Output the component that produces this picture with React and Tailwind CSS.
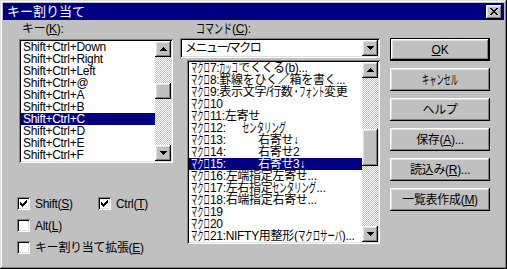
import React from "react";

const raised =
  "shadow-[inset_-1px_-1px_0_#000000,inset_1px_1px_0_#ffffff,inset_-2px_-2px_0_#808080,inset_2px_2px_0_#dfdfdf]";
const sunken =
  "shadow-[inset_1px_1px_0_#808080,inset_-1px_-1px_0_#ffffff,inset_2px_2px_0_#000000,inset_-2px_-2px_0_#dfdfdf]";
const dither =
  "bg-[repeating-conic-gradient(#c0c0c0_0%_25%,#ffffff_0%_50%)] bg-[length:2px_2px]";

// Half-width katakana runs are drawn with full-width glyphs squeezed to half-width cells
function HW({ text, cell = 6.3 }) {
  const parts = text.split(/([\uFF61-\uFF9F]+)/);
  return (
    <>
      {parts.map((p, i) => {
        if (!/[\uFF61-\uFF9F]/.test(p)) return <React.Fragment key={i}>{p}</React.Fragment>;
        const full = p.normalize("NFKC");
        const width = p.length * cell;
        const scale = width / (full.length * 13);
        return (
          <span
            key={i}
            className="inline-block whitespace-nowrap tracking-normal text-[13px] leading-[12px]"
            style={{ width }}
          >
            <span className="inline-block origin-left" style={{ transform: `scaleX(${scale})` }}>
              {full}
            </span>
          </span>
        );
      })}
    </>
  );
}

function Arrow({ down }) {
  return (
    <svg width="7" height="4" viewBox="0 0 7 4" shapeRendering="crispEdges">
      {down ? (
        <g fill="#000">
          <rect x="0" y="0" width="7" height="1" />
          <rect x="1" y="1" width="5" height="1" />
          <rect x="2" y="2" width="3" height="1" />
          <rect x="3" y="3" width="1" height="1" />
        </g>
      ) : (
        <g fill="#000">
          <rect x="3" y="0" width="1" height="1" />
          <rect x="2" y="1" width="3" height="1" />
          <rect x="1" y="2" width="5" height="1" />
          <rect x="0" y="3" width="7" height="1" />
        </g>
      )}
    </svg>
  );
}

function ArrowBtn({ down }) {
  return (
    <div className={`w-[16px] h-[16px] shrink-0 bg-[#c0c0c0] flex items-center justify-center ${raised}`}>
      <Arrow down={down} />
    </div>
  );
}

function Scrollbar({ before, thumb }) {
  return (
    <div className="w-[16px] h-full flex flex-col">
      <ArrowBtn />
      <div className={`flex-1 flex flex-col ${dither}`}>
        <div style={{ height: before }} />
        <div className={`w-[16px] bg-[#c0c0c0] ${raised}`} style={{ height: thumb }} />
      </div>
      <ArrowBtn down />
    </div>
  );
}

function Check({ checked }) {
  return (
    <div className={`w-[13px] h-[13px] bg-white shrink-0 flex items-start justify-start ${sunken}`}>
      {checked && (
        <svg width="7" height="7" viewBox="0 0 7 7" shapeRendering="crispEdges" className="mt-[3px] ml-[3px]">
          <g fill="#000">
            <rect x="6" y="0" width="1" height="1" />
            <rect x="5" y="1" width="2" height="1" />
            <rect x="0" y="2" width="1" height="1" />
            <rect x="4" y="2" width="3" height="1" />
            <rect x="0" y="3" width="2" height="1" />
            <rect x="3" y="3" width="3" height="1" />
            <rect x="0" y="4" width="5" height="1" />
            <rect x="1" y="5" width="3" height="1" />
            <rect x="2" y="6" width="1" height="1" />
          </g>
        </svg>
      )}
    </div>
  );
}

function Btn({ children, def }) {
  return (
    <div
      className={`w-[100px] h-[23px] bg-[#c0c0c0] flex items-center justify-center leading-none ${
        def ? "border border-black" : ""
      }`}
    >
      <div className={`w-full h-full flex items-center justify-center ${raised}`}>{children}</div>
    </div>
  );
}

const keys = [
  "Shift+Ctrl+Down",
  "Shift+Ctrl+Right",
  "Shift+Ctrl+Left",
  "Shift+Ctrl+@",
  "Shift+Ctrl+A",
  "Shift+Ctrl+B",
  "Shift+Ctrl+C",
  "Shift+Ctrl+D",
  "Shift+Ctrl+E",
  "Shift+Ctrl+F",
];

const macros = [
  ["ﾏｸﾛ7:ｶｯｺでくくる(b)..."],
  ["ﾏｸﾛ8:罫線をひく／箱を書く..."],
  ["ﾏｸﾛ9:表示文字/行数･ﾌｫﾝﾄ変更"],
  ["ﾏｸﾛ10"],
  ["ﾏｸﾛ11:左寄せ"],
  ["ﾏｸﾛ12:", "ｾﾝﾀﾘﾝｸﾞ", 51],
  ["ﾏｸﾛ13:", "右寄せ↓", 67],
  ["ﾏｸﾛ14:", "右寄せ2", 67],
  ["ﾏｸﾛ15:", "右寄せ3↓", 67],
  ["ﾏｸﾛ16:左端指定左寄せ..."],
  ["ﾏｸﾛ17:左右指定ｾﾝﾀﾘﾝｸﾞ..."],
  ["ﾏｸﾛ18:右端指定右寄せ..."],
  ["ﾏｸﾛ19"],
  ["ﾏｸﾛ20"],
  ["ﾏｸﾛ21:NIFTY用整形(ﾏｸﾛｻｰﾊﾞ)..."],
];

export default function App() {
  return (
    <div
      className={`w-[507px] h-[269px] bg-[#c0c0c0] p-[3px] flex flex-col overflow-hidden text-black text-[12px] tracking-[-0.3px] font-['Liberation_Sans','Noto_Sans_CJK_JP',sans-serif] shadow-[inset_-1px_-1px_0_#000000,inset_1px_1px_0_#dfdfdf,inset_-2px_-2px_0_#808080,inset_2px_2px_0_#ffffff]`}
    >
      {/* title bar */}
      <div className="h-[17px] bg-[#000080] flex items-center justify-between pl-[4px] pr-[2px] shrink-0">
        <span className="text-white text-[13px] leading-none tracking-normal">キー割り当て</span>
        <div className={`w-[16px] h-[14px] bg-[#c0c0c0] flex items-center justify-center ${raised}`}>
          <svg width="8" height="7" viewBox="0 0 8 7" shapeRendering="crispEdges">
            <g fill="#000">
              <rect x="0" y="0" width="2" height="1" />
              <rect x="6" y="0" width="2" height="1" />
              <rect x="1" y="1" width="2" height="1" />
              <rect x="5" y="1" width="2" height="1" />
              <rect x="2" y="2" width="4" height="1" />
              <rect x="3" y="3" width="2" height="1" />
              <rect x="2" y="4" width="4" height="1" />
              <rect x="1" y="5" width="2" height="1" />
              <rect x="5" y="5" width="2" height="1" />
              <rect x="0" y="6" width="2" height="1" />
              <rect x="6" y="6" width="2" height="1" />
            </g>
          </svg>
        </div>
      </div>

      <div className="flex">
        {/* left column */}
        <div className="ml-[14px] w-[156px] flex flex-col">
          <div className="mt-[3px] h-[12px] leading-[12px] pl-[5px] whitespace-nowrap">
            キー(<u className="underline-offset-[1px]">K</u>):
          </div>
          <div className={`mt-[4px] ml-[2px] w-[154px] h-[124px] bg-white p-[2px] flex ${sunken}`}>
            <div className="flex-1 flex flex-col overflow-hidden">
              {keys.map((k, i) => (
                <div
                  key={k}
                  className={`h-[12px] leading-[12px] pl-[2px] whitespace-nowrap ${
                    i === 6 ? "bg-[#000080] text-white" : ""
                  }`}
                >
                  {k}
                </div>
              ))}
            </div>
            <Scrollbar before={26} thumb={16} />
          </div>

          <div className="mt-[34px] flex items-center h-[13px]">
            <div className="w-[81px] flex items-center">
              <Check checked />
              <span className="ml-[5px] leading-none">
                Shift(<u className="underline-offset-[1px]">S</u>)
              </span>
            </div>
            <div className="flex items-center">
              <Check checked />
              <span className="ml-[5px] leading-none">
                Ctrl(<u className="underline-offset-[1px]">T</u>)
              </span>
            </div>
          </div>
          <div className="mt-[9px] flex items-center h-[13px]">
            <Check />
            <span className="ml-[5px] leading-none">
              Alt(<u className="underline-offset-[1px]">L</u>)
            </span>
          </div>
          <div className="mt-[9px] flex items-center h-[13px]">
            <Check />
            <span className="ml-[5px] leading-none whitespace-nowrap">
              キー割り当て拡張(<u className="underline-offset-[1px]">E</u>)
            </span>
          </div>
        </div>

        {/* middle column */}
        <div className="ml-[7px] w-[200px] flex flex-col">
          <div className="mt-[3px] h-[12px] leading-[12px] pl-[16px] whitespace-nowrap">
            <HW text="ｺﾏﾝﾄﾞ" cell={7.2} />(<u className="underline-offset-[1px]">C</u>):
          </div>
          <div className={`mt-[3px] w-[200px] h-[20px] bg-white p-[2px] flex items-center ${sunken}`}>
            <div className="flex-1 pl-[3px] leading-none whitespace-nowrap tracking-[-1.5px]">メニュー/マクロ</div>
            <ArrowBtn down />
          </div>
          <div className={`mt-[2px] ml-[7px] w-[193px] h-[184px] bg-white p-[2px] flex ${sunken}`}>
            <div className="flex-1 flex flex-col overflow-hidden">
              {macros.map((m, i) => (
                <div
                  key={i}
                  className={`h-[12px] leading-[12px] pl-[2px] whitespace-nowrap flex items-baseline ${
                    i === 8 ? "bg-[#000080] text-white" : ""
                  }`}
                >
                  {m.length === 1 ? (
                    <span>
                      <HW text={m[0]} />
                    </span>
                  ) : (
                    <>
                      <span className="inline-block shrink-0" style={{ width: m[2] }}>
                        <HW text={m[0]} />
                      </span>
                      <span>
                        <HW text={m[1]} />
                      </span>
                    </>
                  )}
                </div>
              ))}
            </div>
            <Scrollbar before={51} thumb={37} />
          </div>
        </div>

        {/* right column */}
        <div className="ml-[10px] mt-[18px] flex flex-col gap-[7px]">
          <Btn def>
            <span>
              <u className="underline-offset-[1px]">O</u>K
            </span>
          </Btn>
          <Btn>
            <HW text="ｷｬﾝｾﾙ" cell={7.2} />
          </Btn>
          <Btn>ヘルプ</Btn>
          <Btn>
            <span>
              保存(<u className="underline-offset-[1px]">A</u>)...
            </span>
          </Btn>
          <Btn>
            <span>
              読込み(<u className="underline-offset-[1px]">R</u>)...
            </span>
          </Btn>
          <Btn>
            <span>
              一覧表作成(<u className="underline-offset-[1px]">M</u>)
            </span>
          </Btn>
        </div>
      </div>
    </div>
  );
}
